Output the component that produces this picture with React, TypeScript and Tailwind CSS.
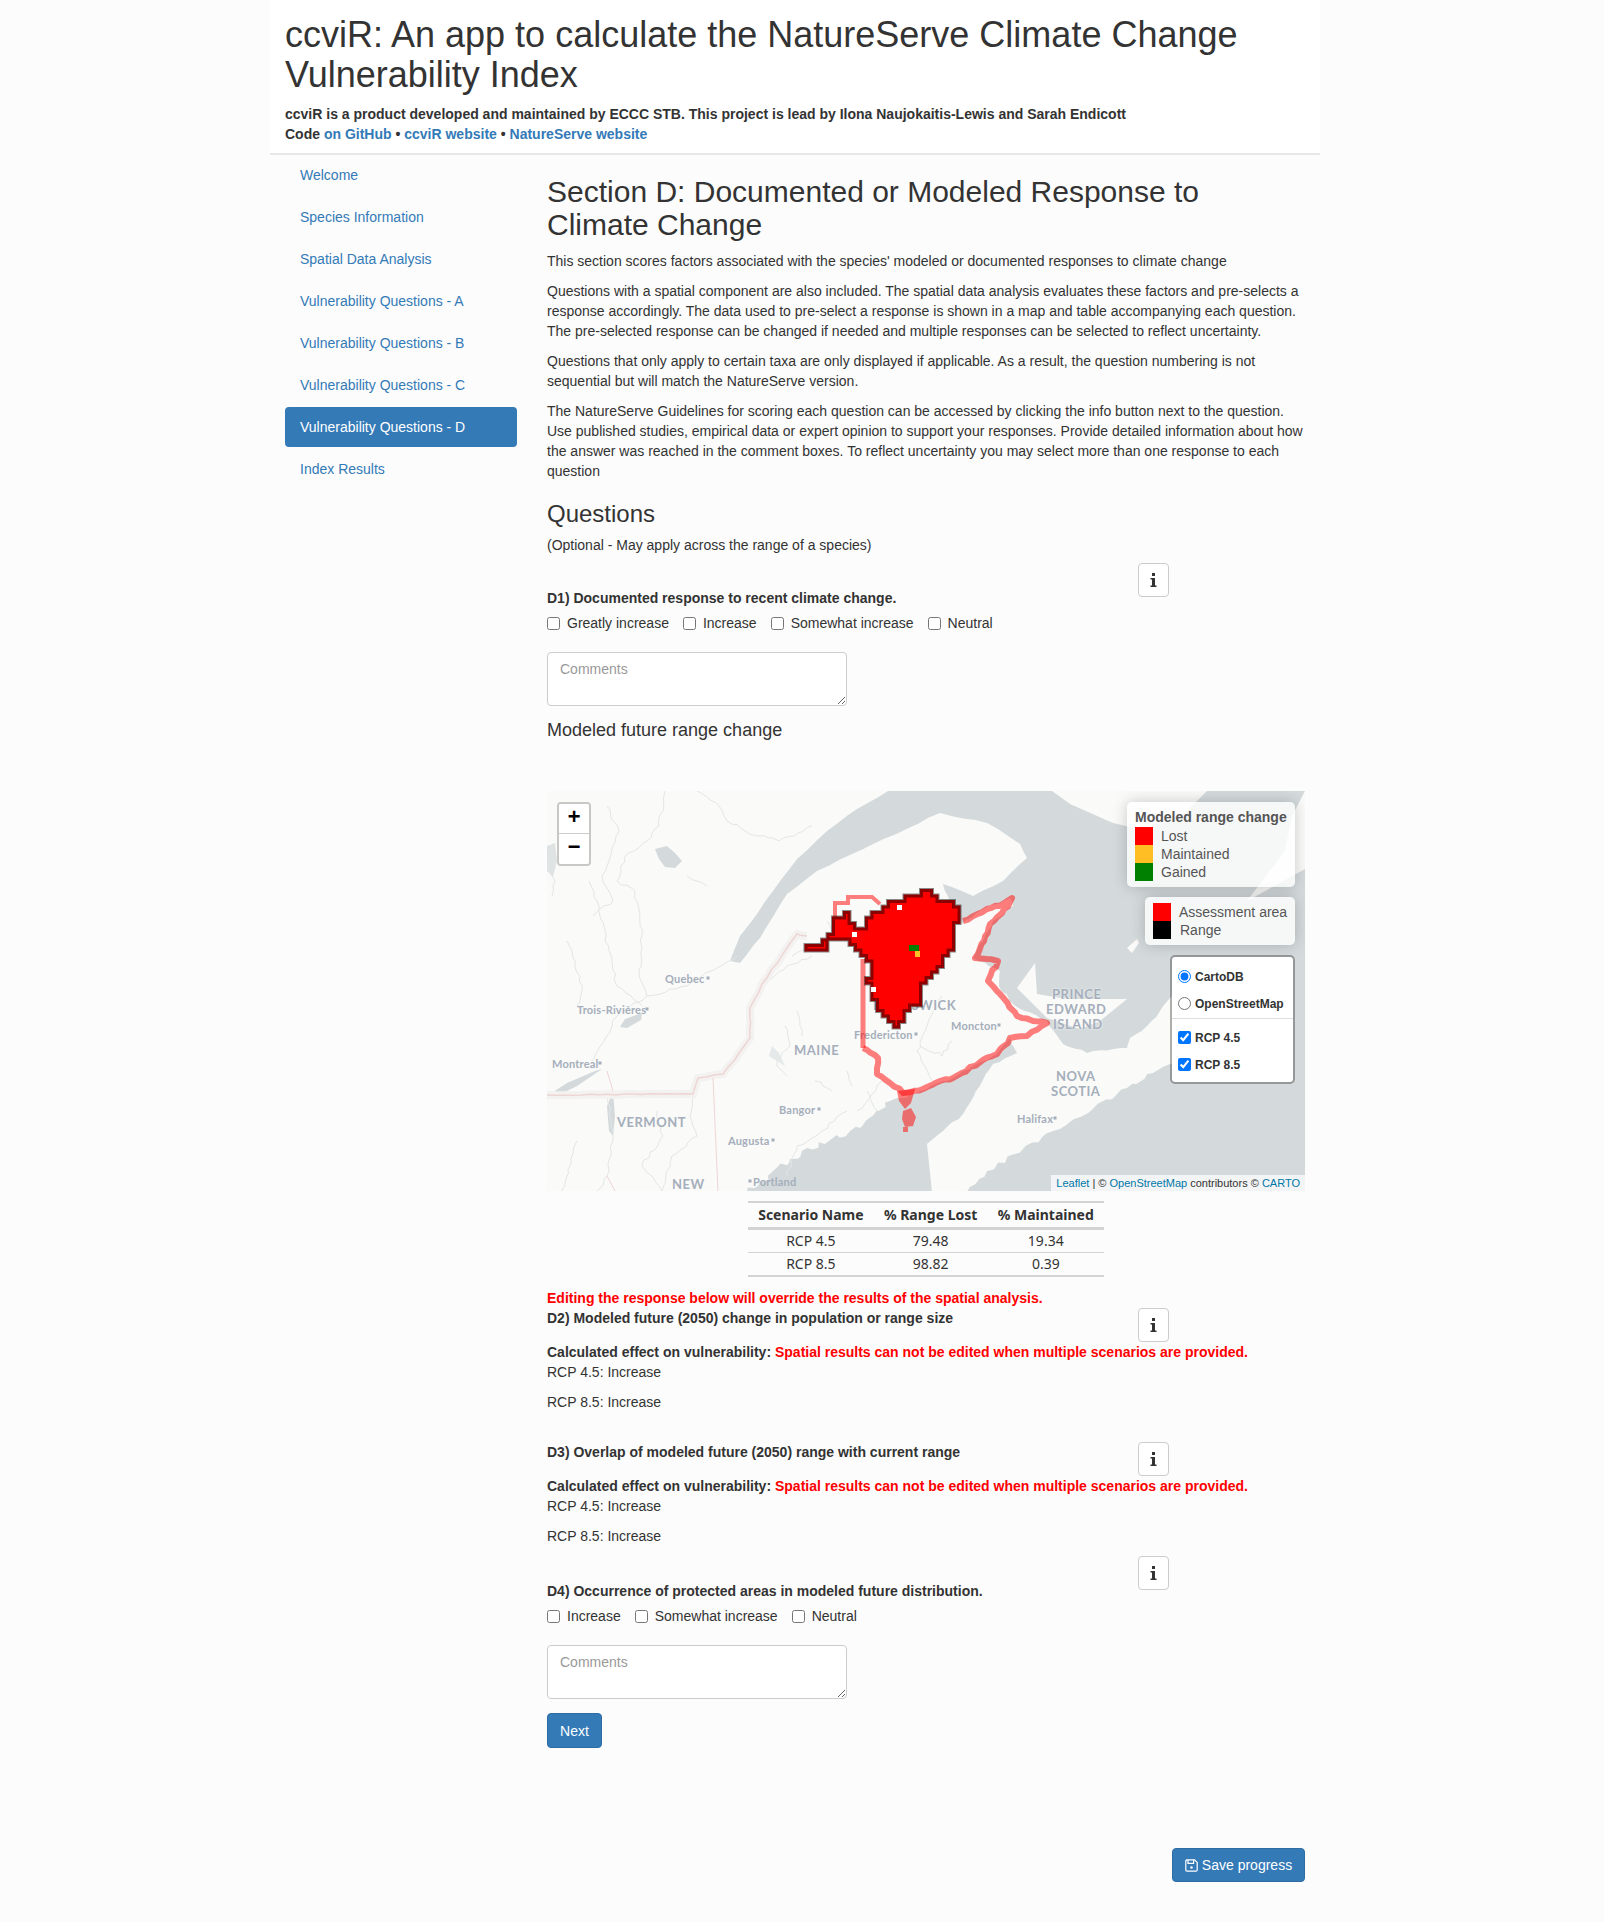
const navItems = [
  "Welcome",
  "Species Information",
  "Spatial Data Analysis",
  "Vulnerability Questions - A",
  "Vulnerability Questions - B",
  "Vulnerability Questions - C",
  "Vulnerability Questions - D",
  "Index Results",
];

type Pt = [number, number];

// outline of the range raster, snapped to grid cells like the real layer
const rangeOutline: Pt[] = [
  [256, 155], [273, 148], [286, 137], [288, 124], [299, 122], [303, 120], [307, 140], [320, 138],
  [320, 125], [333, 113], [351, 108], [360, 105], [376, 100], [390, 108], [408, 113], [411, 123],
  [408, 152], [403, 167], [396, 177], [390, 182], [380, 195], [372, 217], [358, 222], [354, 236],
  [340, 225], [330, 210], [321, 187], [326, 168], [313, 160], [300, 148], [288, 148], [283, 158],
  [265, 160],
];

function stairs(points: Pt[], cell: number) {
  const snap = (v: number) => Math.round(v / cell) * cell;
  let d = "";
  points.forEach((p, i) => {
    const q = points[(i + 1) % points.length];
    if (i === 0) d += `M${snap(p[0])} ${snap(p[1])}`;
    const n = Math.max(1, Math.ceil(Math.max(Math.abs(q[0] - p[0]), Math.abs(q[1] - p[1])) / (cell * 2)));
    for (let k = 1; k <= n; k++) {
      d += `H${snap(p[0] + ((q[0] - p[0]) * k) / n)}V${snap(p[1] + ((q[1] - p[1]) * k) / n)}`;
    }
  });
  return d + "Z";
}

// wobble a line a bit so coasts don't look ruler-drawn
function rough(points: Pt[], amp: number, step = 7): string[] {
  const out: string[] = [];
  let seed = points[0][0] + points[0][1];
  points.forEach((p, i) => {
    const q = points[i + 1];
    if (!q) {
      out.push(`${p[0]} ${p[1]}`);
      return;
    }
    const n = Math.max(1, Math.ceil(Math.hypot(q[0] - p[0], q[1] - p[1]) / step));
    for (let k = 0; k < n; k++) {
      seed += 1;
      const a = Math.sin(seed * 12.9898) * 43758.5453;
      const b = Math.sin(seed * 78.233) * 24634.6345;
      const nx = (a - Math.floor(a)) * 2 - 1;
      const ny = (b - Math.floor(b)) * 2 - 1;
      const off = k === 0 ? 0 : amp;
      out.push(`${(p[0] + ((q[0] - p[0]) * k) / n + nx * off).toFixed(1)} ${(p[1] + ((q[1] - p[1]) * k) / n + ny * off).toFixed(1)}`);
    }
  });
  return out;
}

const line = (pts: Pt[], amp: number, step = 7) => "M" + rough(pts, amp, step).join("L");

const landPath =
  "M" +
  [
    "0 0",
    "341 0",
    ...rough(
      [[341, 0], [310, 18], [280, 40], [250, 68], [226, 100], [193, 145], [183, 170], [193, 172], [213, 147], [240, 103], [270, 80], [326, 53], [393, 22], [440, 32], [473, 53], [480, 67], [456, 90], [426, 105], [396, 93]],
      0.6,
      14,
    ),
    ...rough(
      [[396, 93], [405, 115], [415, 133], [433, 120], [463, 107], [466, 115], [446, 130], [436, 150], [426, 167], [453, 180], [452, 195], [466, 213], [500, 230], [516, 253], [540, 262], [580, 257], [583, 247], [600, 235], [625, 205]],
      1.2,
    ),
    "665 185",
    "665 270",
    ...rough(
      [[623, 273], [580, 297], [506, 340], [440, 380], [420, 401]],
      2.2,
    ),
    "385 401",
    ...rough(
      [[380, 353], [416, 323], [446, 273], [470, 262], [463, 247], [450, 263], [406, 287], [373, 300]],
      1.2,
    ),
    ...rough(
      [[373, 300], [343, 310], [313, 337], [260, 357], [226, 380], [200, 401]],
      3.2,
      5,
    ),
    "0 401",
  ].join("L") +
  "Z";

const assessmentCoast = line(
  [[316, 257], [331, 267], [330, 283], [343, 292], [356, 302], [376, 298], [393, 290], [406, 287], [432, 272], [450, 263], [463, 247], [480, 245], [500, 232], [486, 230], [470, 225], [453, 203], [441, 190], [451, 170], [428, 167], [437, 150], [443, 133], [455, 122], [465, 107], [452, 115], [440, 118], [416, 130]],
  1.3,
  6,
);

const rivers: Pt[][] = [
  [[0, 70], [8, 90], [5, 105]],
  [[60, 15], [72, 40], [62, 70], [55, 85], [66, 110], [46, 125]],
  [[20, 150], [28, 170], [35, 200], [30, 215]],
  [[42, 90], [50, 110], [62, 160], [70, 195], [95, 215]],
  [[118, 0], [112, 35], [100, 50], [78, 65], [70, 90], [88, 100], [95, 145], [92, 185], [100, 205], [70, 225], [45, 270]],
  [[150, 0], [172, 15], [180, 30], [210, 45], [232, 50], [265, 35]],
  [[140, 85], [150, 90], [160, 95]],
  [[100, 205], [140, 195], [190, 165]],
  [[280, 130], [285, 145], [300, 150]],
  [[245, 165], [262, 155], [280, 150]],
  [[215, 195], [240, 175], [265, 165]],
  [[238, 235], [243, 255], [235, 262], [230, 275], [240, 285]],
  [[250, 220], [255, 245]],
  [[300, 280], [305, 295]],
  [[268, 290], [285, 300]],
  [[320, 300], [330, 320]],
  [[395, 205], [380, 235], [370, 260], [385, 290]],
  [[373, 255], [395, 265], [405, 250]],
  [[60, 300], [66, 340], [60, 385], [50, 400]],
  [[30, 350], [15, 400]],
  [[110, 320], [116, 345], [95, 375], [115, 400]],
  [[146, 303], [143, 325], [150, 345], [125, 365], [115, 400]],
  [[300, 320], [275, 340], [250, 355], [240, 385]],
  [[335, 290], [310, 320]],
];

const borderLine = line(
  [[0, 304], [146, 303], [151, 287], [176, 283], [192, 262], [203, 247], [203, 217], [215, 193], [250, 143], [260, 145]],
  0.7,
  9,
);

const mapLabels = [
  { text: "Quebec", left: 118, top: 187, dot: 161 },
  { text: "Trois-Rivières", left: 30, top: 218, dot: 100 },
  { text: "Montreal", left: 5, top: 272, dot: 53 },
  { text: "Bangor", left: 232, top: 318, dot: 272 },
  { text: "Augusta", left: 181, top: 349, dot: 226 },
  { text: "Fredericton", left: 307, top: 243, dot: 369 },
  { text: "Moncton", left: 404, top: 234, dot: 452 },
  { text: "Halifax", left: 470, top: 327, dot: 508 },
  { text: "Portland", left: 206, top: 390, dot: 203 },
];

const regionLabels = [
  { text: "MAINE", left: 247, top: 259 },
  { text: "VERMONT", left: 70, top: 331 },
  { text: "NEW", left: 125, top: 393 },
  { text: "BRUNSWICK", left: 326, top: 214 },
  { text: "PRINCE", left: 505, top: 203 },
  { text: "EDWARD", left: 499, top: 218 },
  { text: "ISLAND", left: 506, top: 233 },
  { text: "NOVA", left: 509, top: 285 },
  { text: "SCOTIA", left: 504, top: 300 },
];

function InfoButton() {
  return (
    <button className="flex h-[34px] w-[31px] items-center justify-center rounded border border-[#ccc] bg-white">
      <svg width="7" height="14" viewBox="0 0 7 14" fill="#333">
        <rect x="2" y="0" width="3" height="3" />
        <path d="M0.5 5H5V12.5H6.5V14H0.5V12.5H2V6.5H0.5Z" />
      </svg>
    </button>
  );
}

function SaveIcon() {
  return (
    <svg width="13" height="13" viewBox="0 0 13 13" fill="none" stroke="#fff" strokeWidth="1.2">
      <path d="M1.6 0.8H9.6L12.2 3.4V11a1.2 1.2 0 0 1-1.2 1.2H2A1.2 1.2 0 0 1 0.8 11V1.6Z" />
      <path d="M3 1V4.4H8.6V1" />
      <circle cx="6.5" cy="8.5" r="1.3" fill="#fff" stroke="none" />
    </svg>
  );
}

function CheckRow({ options }: { options: string[] }) {
  return (
    <div className="flex gap-[14px]">
      {options.map((o) => (
        <label key={o} className="flex h-5 items-center gap-[7px]">
          <input type="checkbox" className="m-0 h-[13px] w-[13px]" />
          {o}
        </label>
      ))}
    </div>
  );
}

function Comments() {
  return (
    <textarea
      placeholder="Comments"
      className="block h-[54px] w-[300px] rounded border border-[#ccc] bg-white px-3 py-[6px] placeholder:text-[#999]"
    />
  );
}

function SpatialResult() {
  return (
    <>
      <p className="font-bold">
        Calculated effect on vulnerability:{" "}
        <span className="text-[#ff0000]">Spatial results can not be edited when multiple scenarios are provided.</span>
      </p>
      <p>RCP 4.5: Increase</p>
      <p className="mt-[10px]">RCP 8.5: Increase</p>
    </>
  );
}

function LegendSwatch({ color }: { color: string }) {
  return <i className="mr-2 block h-[18px] w-[18px] shrink-0" style={{ background: color }} />;
}

function RangeMap() {
  const outline = stairs(rangeOutline, 5.5);
  return (
    <div className="relative h-[400px] w-[758px] overflow-hidden bg-[#d4dadc] font-['Liberation_Sans',sans-serif]">
      <svg className="absolute inset-0" width="758" height="400" viewBox="0 0 758 400">
        {/* land */}
        <path fill="#fafaf8" d={landPath} />
        <path fill="#fafaf8" d="M470 197L488 172L490 203L520 208L580 208L553 230L533 238L500 227L483 210Z" />
        <path fill="#fafaf8" d="M505 0L523 13L566 32L600 40L640 20L660 0Z" />
        <path fill="#fafaf8" d="M758 0L745 25L738 60L700 110L758 78Z" />
        <path fill="#fafaf8" d="M580 157L590 148L592 152L585 162Z" />
        {/* lakes and rivers */}
        <path fill="#d4dadc" d="M108 58L120 55L128 62L135 70L128 77L118 76L112 68Z" />
        <path fill="#d4dadc" d="M73 236L78 228L95 222L94 229L80 237Z" />
        <path fill="#d4dadc" d="M0 305L20 292L48 280L55 278L30 295L8 306Z" />
        <path fill="#d4dadc" d="M60 315L66 300L68 325L66 345L62 340Z" />
        <path fill="#dfe3e4" d="M0 55L8 52L10 70L6 86L0 80Z" />
        <path fill="#e6e9ea" d="M225 255L232 262L238 275L230 270L222 265Z" />
        {rivers.map((r, i) => (
          <path key={i} d={line(r, 1.6, 6)} fill="none" stroke="#e3e6e7" strokeWidth="1" />
        ))}
        {/* borders */}
        <path d={borderLine} fill="none" stroke="#f4f2f0" strokeWidth="8" />
        <path d={borderLine} fill="none" stroke="#edd5d4" strokeWidth="1.5" />
        <path d="M166 287L171 401M60 280L66 300M60 385L68 400" fill="none" stroke="#edd5d4" strokeWidth="1" />
      </svg>

      {mapLabels.map((l) => (
        <div key={l.text}>
          <span
            className="absolute -translate-y-1/2 font-['Lato',sans-serif] text-[11px] leading-none font-bold tracking-[0.2px] whitespace-nowrap text-[#a5aebb]"
            style={{ left: l.left, top: l.top }}
          >
            {l.text}
          </span>
          <span
            className="absolute h-[3px] w-[3px] -translate-x-1/2 -translate-y-1/2 bg-[#a5aebb]"
            style={{ left: l.dot, top: l.top }}
          />
        </div>
      ))}
      {regionLabels.map((l) => (
        <span
          key={l.text}
          className="absolute -translate-y-1/2 font-['Lato',sans-serif] text-[13px] leading-none font-bold tracking-[0.5px] whitespace-nowrap text-[#a5aebb] [text-shadow:0_0_2px_#fafaf8]"
          style={{ left: l.left, top: l.top }}
        >
          {l.text}
        </span>
      ))}

      <svg className="absolute inset-0" width="758" height="400" viewBox="0 0 758 400">
        {/* assessment area */}
        <path d={assessmentCoast} fill="none" stroke="#ff0000" strokeOpacity="0.5" strokeWidth="6" strokeLinejoin="round" />
        <path d="M316 168L316 257" fill="none" stroke="#ff0000" strokeOpacity="0.5" strokeWidth="5" />
        <path d="M333 113L325 106L301 106L301 112L288 112L288 127" fill="none" stroke="#ff0000" strokeOpacity="0.5" strokeWidth="4" />
        <path fill="#ff0000" fillOpacity="0.5" d="M350 300L368 298L364 312L358 318L352 310ZM356 320L364 317L369 326L366 335L358 336L355 328ZM356 336L361 336L361 341L356 341Z" />
        {/* range raster: red spills past the outline, so the dark stroke sits mostly on red */}
        <path d={outline} fill="#ff0000" stroke="#ff0000" strokeWidth="2" />
        <path d={outline} fill="none" stroke="#000" strokeOpacity="0.45" strokeWidth="4" />
        <rect x="350" y="114" width="5" height="5" fill="#fff" />
        <rect x="305" y="141" width="5" height="5" fill="#fff" />
        <rect x="324" y="196" width="5" height="5" fill="#fff" />
        <rect x="362" y="154" width="10" height="6" fill="#008000" />
        <rect x="368" y="160" width="5" height="6" fill="#ffbf24" />
      </svg>

      {/* zoom control */}
      <div className="absolute top-[11px] left-[10px] w-[34px] rounded-[4px] border-2 border-black/20 bg-clip-padding font-['Liberation_Mono',monospace] text-[22px] leading-[30px] font-bold text-black">
        <div className="h-[30px] rounded-t-[2px] border-b border-[#ccc] bg-white text-center">+</div>
        <div className="h-[30px] rounded-b-[2px] bg-white text-center">−</div>
      </div>

      {/* legends and layers */}
      <div className="absolute top-[11px] right-[10px] flex flex-col items-end gap-[10px]">
        <div className="w-[168px] rounded-[5px] bg-white/80 px-2 py-[6px] text-[14px] leading-[18px] text-[#555] shadow-[0_0_15px_rgba(0,0,0,0.2)]">
          <div className="mb-[1px] font-bold">Modeled range change</div>
          {[
            ["#ff0000", "Lost"],
            ["#ffbf24", "Maintained"],
            ["#008000", "Gained"],
          ].map(([c, t]) => (
            <div key={t} className="flex h-[18px]">
              <LegendSwatch color={c} />
              <span>{t}</span>
            </div>
          ))}
        </div>
        <div className="w-[150px] rounded-[5px] bg-white/80 px-2 py-[6px] text-[14px] leading-[18px] whitespace-nowrap text-[#555] shadow-[0_0_15px_rgba(0,0,0,0.2)]">
          <div className="flex h-[18px]">
            <LegendSwatch color="#ff0000" />
            <span>Assessment area</span>
          </div>
          <div className="flex h-[18px]">
            <LegendSwatch color="#000000" />
            <span className="ml-[1px]">Range</span>
          </div>
        </div>
        <div className="h-[129px] w-[125px] rounded-[5px] border-2 border-black/30 bg-white bg-clip-padding pt-[6px] pl-[6px] text-[12px] font-bold text-[#333]">
          <label className="flex h-[27px] items-center gap-[4px]">
            <input type="radio" name="basemap" defaultChecked className="m-0 h-[13px] w-[13px]" />
            CartoDB
          </label>
          <label className="flex h-[27px] items-center gap-[4px]">
            <input type="radio" name="basemap" className="m-0 h-[13px] w-[13px]" />
            OpenStreetMap
          </label>
          <div className="-ml-[6px] mb-[5px] mt-[1px] border-t border-[#ddd]" />
          <label className="flex h-[27px] items-center gap-[4px]">
            <input type="checkbox" defaultChecked className="m-0 h-[13px] w-[13px]" />
            RCP 4.5
          </label>
          <label className="flex h-[27px] items-center gap-[4px]">
            <input type="checkbox" defaultChecked className="m-0 h-[13px] w-[13px]" />
            RCP 8.5
          </label>
        </div>
      </div>

      <div className="absolute right-0 bottom-0 bg-white/70 px-[5px] text-[11px] leading-[16px] text-[#333]">
        <a className="text-[#0078a8]">Leaflet</a> | © <a className="text-[#0078a8]">OpenStreetMap</a> contributors ©{" "}
        <a className="text-[#0078a8]">CARTO</a>
      </div>
    </div>
  );
}

function ResultsTable() {
  return (
    <table className="mx-auto mt-[10px] w-[356px] border-y-2 border-[#d3d3d3] font-['Noto_Sans',sans-serif] text-[14px] leading-[20px] text-[#333]">
      <thead>
        <tr className="h-[26px] border-b-[3px] border-[#d3d3d3] font-bold">
          <th className="px-[10px] text-center">Scenario Name</th>
          <th className="px-[10px] text-center">% Range Lost</th>
          <th className="px-[10px] text-center">% Maintained</th>
        </tr>
      </thead>
      <tbody>
        <tr className="h-[24px] border-b border-[#d3d3d3] text-center">
          <td>RCP 4.5</td>
          <td>79.48</td>
          <td>19.34</td>
        </tr>
        <tr className="h-[24px] text-center">
          <td>RCP 8.5</td>
          <td>98.82</td>
          <td>0.39</td>
        </tr>
      </tbody>
    </table>
  );
}

export default function App() {
  return (
    <div className="min-h-[1922px] bg-[#fcfcfc] font-['Liberation_Sans',Arial,sans-serif] text-[14px] leading-[20px] text-[#333]">
      <div className="ml-[270px] w-[1050px]">
        <header className="h-[155px] border-b-2 border-[#e7e7e7] bg-white px-[15px] pt-[15px]">
          <h1 className="text-[36px] leading-[40px]">
            ccviR: An app to calculate the NatureServe Climate Change Vulnerability Index
          </h1>
          <p className="mt-[9px] font-bold">
            ccviR is a product developed and maintained by ECCC STB. This project is lead by Ilona Naujokaitis-Lewis and
            Sarah Endicott
          </p>
          <p className="font-bold">
            Code <a className="text-[#337ab7]">on GitHub</a> • <a className="text-[#337ab7]">ccviR website</a> •{" "}
            <a className="text-[#337ab7]">NatureServe website</a>
          </p>
        </header>

        <div className="flex px-[15px]">
          <nav className="flex w-[232px] shrink-0 flex-col gap-[2px]">
            {navItems.map((item) => (
              <a
                key={item}
                className={
                  item === "Vulnerability Questions - D"
                    ? "h-10 rounded bg-[#337ab7] px-[15px] py-[10px] text-white"
                    : "h-10 rounded px-[15px] py-[10px] text-[#337ab7]"
                }
              >
                {item}
              </a>
            ))}
          </nav>

          <main className="ml-[30px] w-[758px]">
            <h2 className="mt-[20px] text-[30px] leading-[33px]">
              Section D: Documented or Modeled Response to Climate Change
            </h2>
            <p className="mt-[10px]">
              This section scores factors associated with the species' modeled or documented responses to climate change
            </p>
            <p className="mt-[10px]">
              Questions with a spatial component are also included. The spatial data analysis evaluates these factors and
              pre-selects a response accordingly. The data used to pre-select a response is shown in a map and table
              accompanying each question. The pre-selected response can be changed if needed and multiple responses can be
              selected to reflect uncertainty.
            </p>
            <p className="mt-[10px]">
              Questions that only apply to certain taxa are only displayed if applicable. As a result, the question
              numbering is not sequential but will match the NatureServe version.
            </p>
            <p className="mt-[10px]">
              The NatureServe Guidelines for scoring each question can be accessed by clicking the info button next to the
              question. Use published studies, empirical data or expert opinion to support your responses. Provide detailed
              information about how the answer was reached in the comment boxes. To reflect uncertainty you may select more
              than one response to each question
            </p>
            <h3 className="mt-[20px] text-[24px] leading-[26px]">Questions</h3>
            <p className="mt-[8px]">(Optional - May apply across the range of a species)</p>

            <div className="mt-[8px] flex">
              <div className="w-[591px] pt-[25px]">
                <p className="font-bold">D1) Documented response to recent climate change.</p>
                <div className="mt-[5px]">
                  <CheckRow options={["Greatly increase", "Increase", "Somewhat increase", "Neutral"]} />
                </div>
              </div>
              <InfoButton />
            </div>
            <div className="mt-[19px]">
              <Comments />
            </div>
            <h4 className="mt-[14px] text-[18px] leading-[20px]">Modeled future range change</h4>
            <div className="mt-[51px]">
              <RangeMap />
            </div>
            <ResultsTable />

            <p className="mt-[11px] font-bold text-[#ff0000]">Editing the response below will override the results of the spatial analysis.</p>
            <div className="flex h-[34px]">
              <p className="w-[591px] font-bold">D2) Modeled future (2050) change in population or range size</p>
              <InfoButton />
            </div>
            <SpatialResult />

            <div className="mt-[30px] flex h-[34px]">
              <p className="w-[591px] font-bold">D3) Overlap of modeled future (2050) range with current range</p>
              <InfoButton />
            </div>
            <SpatialResult />

            <div className="mt-[10px] flex">
              <div className="w-[591px] pt-[25px]">
                <p className="font-bold">D4) Occurrence of protected areas in modeled future distribution.</p>
                <div className="mt-[5px]">
                  <CheckRow options={["Increase", "Somewhat increase", "Neutral"]} />
                </div>
              </div>
              <InfoButton />
            </div>
            <div className="mt-[19px]">
              <Comments />
            </div>
            <button className="mt-[14px] block h-[35px] w-[55px] rounded border border-[#2e6da4] bg-[#337ab7] text-white">
              Next
            </button>
            <div className="mt-[100px] flex justify-end">
              <button className="flex h-[34px] w-[133px] items-center justify-center gap-1 rounded border border-[#2e6da4] bg-[#337ab7] text-white">
                <SaveIcon />
                Save progress
              </button>
            </div>
          </main>
        </div>
      </div>
    </div>
  );
}
